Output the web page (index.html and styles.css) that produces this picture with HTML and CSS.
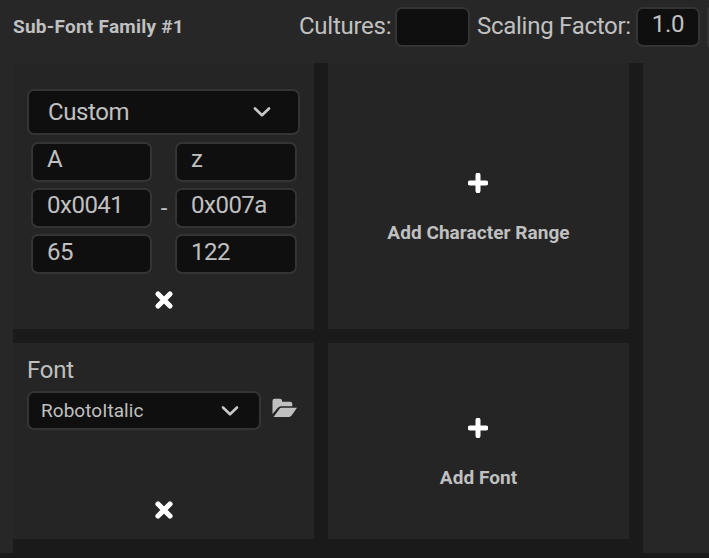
FILE: index.html
```html
<!DOCTYPE html>
<html lang="en">
<head>
<meta charset="utf-8">
<title>Composite Font Editor</title>
<link rel="stylesheet" href="styles.css">
</head>
<body>
<header class="header">
  <h1 class="title">Sub-Font Family #1</h1>
  <div class="controls">
    <span class="label cultures-label">Cultures:</span>
    <div class="field cultures"></div>
    <span class="label scaling-label">Scaling Factor:</span>
    <div class="field scaling"><span>1.0</span></div>
    <div class="field overflow"></div>
  </div>
</header>
<main class="grid">
  <section class="card range">
    <div class="select"><span>Custom</span><svg class="chevron" width="18" height="12" viewBox="0 0 18 12"><path d="M2 2.5 9 9.3 16 2.5"/></svg></div>
    <div class="bounds">
      <div class="column"><div class="field">A</div><div class="field">0x0041</div><div class="field decimal">65</div></div>
      <span class="dash">-</span>
      <div class="column upper"><div class="field">z</div><div class="field">0x007a</div><div class="field decimal">122</div></div>
    </div>
    <svg class="remove" width="20" height="20" viewBox="0 0 20 20"><path d="M4 4 16 16M16 4 4 16"/></svg>
  </section>
  <section class="card add add-range">
    <svg class="plus" width="20" height="20" viewBox="0 0 20 20"><path d="M10 2.2V17.8M2.2 10H17.8"/></svg>
    <span class="action">Add Character Range</span>
  </section>
  <section class="card font">
    <span class="font-label">Font</span>
    <div class="font-row">
      <div class="select small"><span>RobotoItalic</span><svg class="chevron" width="18" height="12" viewBox="0 0 18 12"><path d="M2 2.5 9 9.3 16 2.5"/></svg></div>
      <svg class="folder" width="25" height="20" viewBox="0 0 25 20"><path d="M.5 16V3Q.5.8 2.6.8H8Q10 .8 10.2 3.8H18Q20.3 3.8 20.3 6V8.2H9Q7 8.2 5.8 9.8Z"/><path d="M1.6 19 7.2 11.2Q8.1 9.8 9.8 9.8H25L19.8 17.2Q18.6 19 17 19Z"/></svg>
    </div>
    <svg class="remove" width="20" height="20" viewBox="0 0 20 20"><path d="M4 4 16 16M16 4 4 16"/></svg>
  </section>
  <section class="card add add-font">
    <svg class="plus" width="20" height="20" viewBox="0 0 20 20"><path d="M10 2.2V17.8M2.2 10H17.8"/></svg>
    <span class="action">Add Font</span>
  </section>
</main>
</body>
</html>
```
FILE: styles.css
```css
* { box-sizing: border-box; }
body {
  margin: 0;
  height: 558px;
  overflow: hidden;
  background: #272727;
  border-bottom: 5px solid #1a1a1a;
  color: #c0c0c0;
  font: 24px/28px Roboto, sans-serif;
  letter-spacing: -.27px;
  white-space: nowrap;
}
svg { display: block; flex: none; }
.header {
  display: flex;
  justify-content: space-between;
  height: 63px;
  padding: 7px 0 0 13px;
}
.title {
  margin: 8px 0 0;
  font-size: 19px;
  line-height: 24px;
  font-weight: 700;
  letter-spacing: .25px;
}
.controls { display: flex; width: 410px; flex: none; }
.label { flex: none; padding-top: 5px; }
.cultures-label { width: 96px; }
.scaling-label { width: 159px; }
.field {
  height: 40px;
  flex: none;
  padding: 1px 14px;
  background: #0f0f0f;
  border: 2px solid #343434;
  border-radius: 7px;
}
.cultures { width: 75px; margin-right: 7px; }
.scaling { width: 64px; margin-right: 7px; text-align: center; padding: 1px 0; }
.overflow { width: 2px; padding: 0; border-width: 0; border-radius: 2px 0 0 2px; background: #343434; }
.grid {
  display: grid;
  grid-template-columns: 301px 301px;
  grid-template-rows: 266px 196px;
  gap: 14px;
  width: 630px;
  height: 490px;
  margin-left: 13px;
  background: #1a1a1a;
}
.card { display: flex; flex-direction: column; background: #252525; }
.range { padding: 26px 14px 0; }
.select {
  display: flex;
  align-items: center;
  justify-content: space-between;
  width: 273px;
  height: 46px;
  padding: 0 27px 0 19px;
  background: #0f0f0f;
  border: 2px solid #343434;
  border-radius: 7px;
  letter-spacing: -.4px;
}
.chevron { fill: none; stroke: #c8c8c8; stroke-width: 2.6; stroke-linecap: round; stroke-linejoin: round; }
.bounds { display: flex; align-items: center; justify-content: space-between; padding: 7px 3px 0 4px; }
.column { display: flex; flex-direction: column; gap: 6px; width: 121px; letter-spacing: -.5px; }
.column.upper { width: 122px; }
.decimal { padding-top: 2px; }
.dash { width: 22px; padding-left: 1px; text-align: center; }
.remove { align-self: center; fill: none; stroke: #fff; stroke-width: 5.2; stroke-linecap: round; }
.range .remove { margin-top: 16px; }
.add { align-items: center; }
.add-range { padding-top: 110px; }
.add-font { padding-top: 75px; }
.plus { margin-right: 2px; fill: none; stroke: #fff; stroke-width: 5; stroke-linecap: round; }
.action { margin-top: 28px; font-size: 19px; line-height: 24px; font-weight: 700; letter-spacing: .05px; }
.font { padding: 13px 14px 0; }
.font-row { display: flex; align-items: center; margin-top: 7px; }
.select.small { width: 234px; height: 39px; padding: 0 20px 0 12px; font-size: 19px; letter-spacing: .05px; }
.folder { margin: -6px 0 0 11px; fill: #c0c0c0; }
.font .remove { margin-top: 70px; }
```
